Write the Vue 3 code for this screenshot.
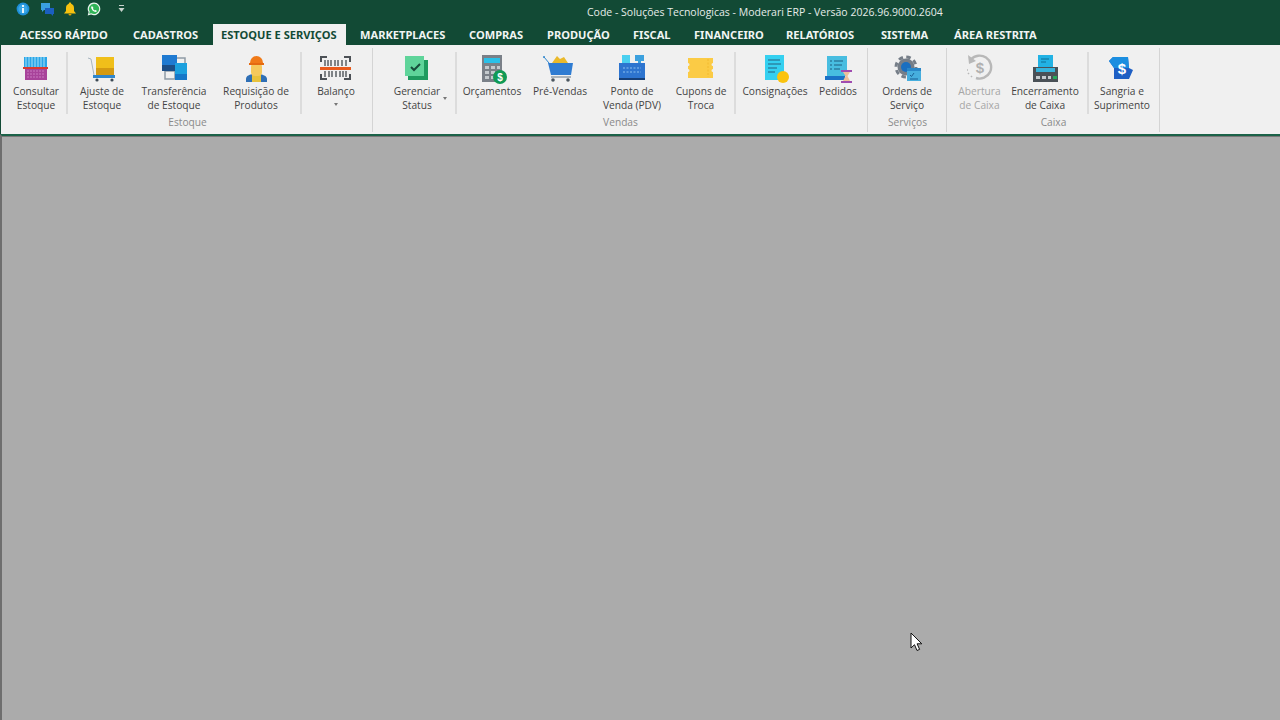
<script setup>
const tabs = ['ACESSO RÁPIDO', 'CADASTROS', 'ESTOQUE E SERVIÇOS', 'MARKETPLACES', 'COMPRAS', 'PRODUÇÃO', 'FISCAL', 'FINANCEIRO', 'RELATÓRIOS', 'SISTEMA', 'ÁREA RESTRITA']

const groups = [
  {
    label: 'Estoque', width: 371, pad: 4,
    items: [
      { icon: 'consultar', lines: ['Consultar', 'Estoque'], width: 60, sep: true },
      { icon: 'ajuste', lines: ['Ajuste de', 'Estoque'], width: 68 },
      { icon: 'transf', lines: ['Transferência', 'de Estoque'], width: 76 },
      { icon: 'req', lines: ['Requisição de', 'Produtos'], width: 88, sep: true },
      { icon: 'balanco', lines: ['Balanço'], width: 68, arrow: 'below' }
    ]
  },
  {
    label: 'Vendas', width: 495, pad: 6,
    items: [
      { icon: 'status', lines: ['Gerenciar', 'Status'], width: 76, arrow: 'side', sep: true },
      { icon: 'orc', lines: ['Orçamentos'], width: 70 },
      { icon: 'pre', lines: ['Pré-Vendas'], width: 66 },
      { icon: 'pdv', lines: ['Ponto de', 'Venda (PDV)'], width: 78 },
      { icon: 'cupons', lines: ['Cupons de', 'Troca'], width: 60, sep: true, after: 3 },
      { icon: 'consig', lines: ['Consignações'], width: 78 },
      { icon: 'pedidos', lines: ['Pedidos'], width: 48 }
    ]
  },
  {
    label: 'Serviços', width: 79, pad: 0,
    items: [{ icon: 'ordens', lines: ['Ordens de', 'Serviço'], width: 78 }]
  },
  {
    label: 'Caixa', width: 213, pad: 0,
    items: [
      { icon: 'abertura', lines: ['Abertura', 'de Caixa'], width: 65, disabled: true },
      { icon: 'encerramento', lines: ['Encerramento', 'de Caixa'], width: 66, sep: true, after: 9 },
      { icon: 'sangria', lines: ['Sangria e', 'Suprimento'], width: 66 }
    ]
  }
]
</script>

<template>
  <div class="app">
    <header class="titlebar">
      <div class="quick">
        <svg class="qicon" viewBox="0 0 14 14">
          <circle cx="7" cy="7" r="6.4" fill="#1e8fd8" />
          <circle cx="7" cy="7" r="4.6" fill="#39a8e8" />
          <rect x="6" y="6" width="2" height="5" fill="#e6f4fc" />
          <rect x="6" y="3" width="2" height="2" fill="#e6f4fc" />
        </svg>
        <svg class="qicon" viewBox="0 0 14 14">
          <path d="M1 1h9v7H4l-2 2V8H1z" fill="#3aa0e0" />
          <path d="M5 6h9v6h-1v2l-2-2H5z" fill="#1b5fc0" />
        </svg>
        <svg class="qicon" viewBox="0 0 14 14">
          <path d="M7 .5c.8 0 1.2.6 1.2 1.2C10 2.300 11 4 11 6v3l2 2.500H1L3 9V6c0-2 1-3.700 2.800-4.300C5.800 1.100 6.200.5 7 .5z" fill="#f6c20f" />
          <path d="M5.500 12h3a1.500 1.500 0 0 1-3 0z" fill="#e2a400" />
        </svg>
        <svg class="qicon" viewBox="0 0 14 14">
          <path d="M7 .6a6.300 6.300 0 0 0-5.400 9.500L.7 13.400l3.400-.9A6.300 6.300 0 1 0 7 .6z" fill="#e9f5ee" />
          <path d="M7 1.800a5.100 5.100 0 0 0-4.300 7.800l-.5 2.100 2.100-.5A5.100 5.100 0 1 0 7 1.800z" fill="#2fb457" />
          <path d="M5 4c-.7.5-1 1.300-.7 2.200.5 1.500 1.900 3 3.500 3.600.9.300 1.700 0 2.200-.8l-1.500-1-.7.600c-.8-.4-1.500-1.100-1.900-1.900l.6-.7z" fill="#fff" />
        </svg>
        <svg class="qmore" viewBox="0 0 7 8">
          <rect x="1" y="0" width="5" height="1" fill="#c8d2cd" />
          <path d="M0.500 3h6L3.500 7z" fill="#c8d2cd" />
        </svg>
      </div>
      <div class="title">Code - Soluções Tecnologicas - Moderari ERP - Versão 2026.96.9000.2604</div>
    </header>

    <nav class="tabs">
      <div v-for="(tab, i) in tabs" :key="tab" class="tab" :class="{ active: i === 2 }">{{ tab }}</div>
    </nav>

    <section class="ribbon">
      <div v-for="group in groups" :key="group.label" class="group" :style="{ width: group.width + 'px' }">
        <div class="items" :style="{ paddingLeft: group.pad + 'px' }">
          <template v-for="item in group.items" :key="item.icon">
            <div class="item" :class="{ disabled: item.disabled }" :style="{ width: item.width + 'px' }">
              <svg class="icon" viewBox="0 0 36 30">
                <template v-if="item.icon === 'consultar'">
                  <rect x="6" y="3" width="23" height="10" fill="#2aa5e8" />
                  <path d="M8 3v10M11 3v10M14 3v10M17 3v10M20 3v10M23 3v10M26 3v10" stroke="#a4e0f6" stroke-width="1" />
                  <rect x="5" y="13" width="25" height="2" fill="#d8392f" />
                  <rect x="7" y="15" width="22" height="11" fill="#a8439a" />
                  <path d="M9 17h17M9 20h17M9 23h17" stroke="#c97ac0" stroke-width="1" stroke-dasharray="2 1" />
                </template>
                <template v-else-if="item.icon === 'ajuste'">
                  <path d="M4 4l3 1 3 16" fill="none" stroke="#a9b6c0" stroke-width="1" />
                  <rect x="12" y="3" width="18" height="11" fill="#f0bf1a" />
                  <rect x="12" y="14" width="18" height="7" fill="#d49a12" />
                  <rect x="9" y="21" width="22" height="3" fill="#2f86cc" />
                  <circle cx="13" cy="26" r="1.600" fill="#3c4a55" />
                  <circle cx="28" cy="26" r="1.600" fill="#3c4a55" />
                </template>
                <template v-else-if="item.icon === 'transf'">
                  <rect x="20" y="4" width="9" height="8" fill="none" stroke="#8e9aa5" stroke-width="1.500" />
                  <rect x="9" y="17" width="10" height="8" fill="none" stroke="#8e9aa5" stroke-width="1.500" />
                  <rect x="6" y="1" width="15" height="16" fill="#1f7ad1" />
                  <rect x="19" y="9" width="12" height="17" fill="#1ca0de" />
                  <rect x="6" y="11" width="13" height="6" fill="#1c4e86" />
                  <rect x="19" y="20" width="12" height="6" fill="#1577c8" />
                </template>
                <template v-else-if="item.icon === 'req'">
                  <path d="M8 28v-3c0-3 3-5 10-5s11 2 11 5v3z" fill="#2f6fb5" />
                  <rect x="14" y="21" width="9" height="7" fill="#e8c23c" />
                  <rect x="13" y="9" width="11" height="13" rx="4" fill="#f5c95c" />
                  <path d="M12 9a6.500 7 0 0 1 13 0z" fill="#f07a18" />
                  <rect x="11" y="9" width="15" height="2" fill="#e56a10" />
                </template>
                <template v-else-if="item.icon === 'balanco'">
                  <path d="M3 8V3h6M32 8V3h-6M3 20v5h6M32 20v5h-6" fill="none" stroke="#4c5156" stroke-width="2" />
                  <path d="M7 6v6M10 6v6M13 6v6M17 6v6M20 6v6M24 6v6M28 6v6M7 17v6M11 17v6M14 17v6M18 17v6M22 17v6M25 17v6M28 17v6" stroke="#5a5f63" stroke-width="1.500" />
                  <rect x="2" y="13" width="31" height="3" fill="#e85a1c" />
                </template>
                <template v-else-if="item.icon === 'status'">
                  <rect x="9" y="6" width="20" height="20" fill="#1f9b5f" />
                  <rect x="6" y="2" width="19" height="20" fill="#5fd49a" />
                  <path d="M12 13l3 3 6-6" fill="none" stroke="#174c3a" stroke-width="2" />
                </template>
                <template v-else-if="item.icon === 'orc'">
                  <rect x="8" y="1" width="20" height="27" fill="#7a8088" />
                  <rect x="10" y="4" width="16" height="5" fill="#2ac0e8" />
                  <path d="M11 12h4v3h-4zM17 12h4v3h-4zM23 12h3v3h-3zM11 17h4v3h-4zM17 17h4v3h-4zM11 22h4v3h-4zM17 22h4v3h-4z" fill="#c5cace" />
                  <circle cx="26" cy="23" r="7" fill="#109a55" />
                  <text x="26" y="26.500" class="dollar" fill="#fff">$</text>
                </template>
                <template v-else-if="item.icon === 'pre'">
                  <circle cx="2" cy="3" r="1" fill="#2f86cc" />
                  <path d="M2 3l5 6" stroke="#2f86cc" stroke-width="1" />
                  <path d="M10 9l5-7 3 3 4-2 4 6z" fill="#eab92a" />
                  <path d="M6 9h25l-2 12H9z" fill="#2f7cd2" />
                  <path d="M9 23h20" stroke="#9aa5ae" stroke-width="1.600" />
                  <circle cx="11" cy="26" r="1.800" fill="#4b5660" />
                  <circle cx="26" cy="26" r="1.800" fill="#4b5660" />
                </template>
                <template v-else-if="item.icon === 'pdv'">
                  <rect x="8" y="1" width="8" height="9" fill="#4ad0f0" />
                  <rect x="21" y="1" width="9" height="6" fill="#3ba0de" />
                  <rect x="24" y="7" width="3" height="3" fill="#3ba0de" />
                  <rect x="5" y="9" width="26" height="16" fill="#2d74cf" />
                  <rect x="5" y="24" width="26" height="2" fill="#153f78" />
                  <path d="M9 14h18M9 18h18" stroke="#8cc0ee" stroke-width="1" stroke-dasharray="2 1.500" />
                </template>
                <template v-else-if="item.icon === 'cupons'">
                  <path d="M5 4h25v5a1 1 0 0 0 0 3v3a1 1 0 0 0 0 3v6H5v-6a1 1 0 0 0 0-3v-3a1 1 0 0 0 0-3z" fill="#fbcb45" />
                  <path d="M25 5v18" stroke="#f2b92e" stroke-width="1" stroke-dasharray="2 1.500" />
                </template>
                <template v-else-if="item.icon === 'consig'">
                  <rect x="8" y="1" width="19" height="25" fill="#35d0f0" />
                  <path d="M11 6h12M11 10h13M11 14h9M11 18h7" stroke="#27607e" stroke-width="1.200" />
                  <circle cx="26" cy="23" r="6" fill="#fac30e" />
                </template>
                <template v-else-if="item.icon === 'pedidos'">
                  <rect x="7" y="2" width="20" height="20" fill="#48bde0" />
                  <path d="M10 7h2M14 7h9M10 11h2M14 11h8M10 15h2M14 15h6" stroke="#1f5f80" stroke-width="1.200" />
                  <rect x="5" y="22" width="20" height="4" fill="#1b72c6" />
                  <path d="M21 17h11M21 28h11" stroke="#a04bb0" stroke-width="2" />
                  <path d="M23 18h7l-2.500 4 2.500 5h-7l2.500-5z" fill="#eebf9a" />
                </template>
                <template v-else-if="item.icon === 'ordens'">
                  <circle cx="17" cy="13" r="10" fill="none" stroke="#767e88" stroke-width="3" stroke-dasharray="4.500 3.350" />
                  <circle cx="17" cy="13" r="8.500" fill="#767e88" />
                  <circle cx="17" cy="13" r="5" fill="#1a6fc0" />
                  <rect x="18" y="14" width="14" height="13" fill="#46aede" />
                  <rect x="18" y="14" width="14" height="3" fill="#2a87c8" />
                  <path d="M21 21l1.500 1.500L25 19M21 25h8" stroke="#1b5f95" stroke-width="1" fill="none" />
                </template>
                <template v-else-if="item.icon === 'abertura'">
                  <path d="M9 5.500A11.500 11.500 0 1 1 14 24" fill="none" stroke="#b8b8b8" stroke-width="2.400" />
                  <path d="M10 23l-1-1M7 20l-1-1M6 16h-1" stroke="#b8b8b8" stroke-width="1.600" />
                  <path d="M6 1l1 9 7-3z" fill="#b8b8b8" />
                  <text x="18" y="18.500" class="dollar big" fill="#b0b0b0">$</text>
                </template>
                <template v-else-if="item.icon === 'encerramento'">
                  <rect x="11" y="1" width="15" height="15" fill="#22b2e4" />
                  <path d="M14 5h8M14 8h5" stroke="#0f6f95" stroke-width="1.200" />
                  <rect x="6" y="13" width="25" height="15" fill="#4a5157" />
                  <rect x="9" y="14" width="19" height="4" fill="#37b4dc" />
                  <path d="M9 22h4v3H9zM15 22h4v3h-4zM21 22h3v3h-3z" fill="#c6cbce" />
                  <rect x="26" y="22" width="4" height="3" fill="#27a85a" />
                </template>
                <template v-else-if="item.icon === 'sangria'">
                  <path d="M5 7l4-4h15l1 11 4 2-4 9H10V14z" fill="#1e5fc4" />
                  <path d="M5 7l4-4h15l1 11H10z" fill="#1b8ee0" />
                  <text x="18" y="19.500" class="dollar big" fill="#fff">$</text>
                </template>
              </svg>
              <div class="caption">
                <span v-for="line in item.lines" :key="line">{{ line }}</span>
                <i v-if="item.arrow === 'below'" class="caret"></i>
              </div>
              <i v-if="item.arrow === 'side'" class="caret side"></i>
            </div>
            <div v-if="item.sep" class="sep" :style="{ marginLeft: (item.after || 0) + 'px' }"></div>
          </template>
        </div>
        <div class="group-label">{{ group.label }}</div>
      </div>
    </section>

    <main class="workspace">
      <svg class="cursor" viewBox="0 0 13 20" width="13" height="20">
        <path d="M1 1v15l3.500-3.300 2.500 5.800 2.600-1.100-2.500-5.600h4.700z" fill="#fff" stroke="#111" stroke-width="1" />
      </svg>
    </main>
  </div>
</template>

<style scoped>
.app {
  width: 1280px;
  height: 720px;
  display: flex;
  flex-direction: column;
  overflow: hidden;
  font-family: "Open Sans", "Noto Sans", sans-serif;
  background: #124a35;
}

.titlebar {
  height: 24px;
  display: flex;
  align-items: flex-start;
  flex-shrink: 0;
}

.quick {
  display: flex;
  align-items: center;
  gap: 9.500px;
  padding: 2px 0 0 16px;
  width: 587px;
  box-sizing: border-box;
}

.qicon {
  width: 14px;
  height: 14px;
}

.qmore {
  width: 7px;
  height: 8px;
  margin-left: 8px;
}

.title {
  color: #e6ece9;
  font-size: 10.500px;
  line-height: 24px;
  white-space: nowrap;
}

.tabs {
  height: 21px;
  display: grid;
  grid-template-columns: 113px 88px 133px 115px 78px 86px 61px 92px 95px 73px auto;
  justify-content: start;
  padding-left: 12px;
  flex-shrink: 0;
}

.tab {
  padding-left: 8px;
  color: #f1f5f3;
  font-family: "Noto Sans", sans-serif;
  font-size: 11.100px;
  font-weight: 700;
  line-height: 21px;
  white-space: nowrap;
}

.tab.active {
  background: #f0f0f0;
  color: #134b36;
}

.tab:nth-child(4) {
  padding-left: 14px;
}

.ribbon {
  height: 89px;
  display: flex;
  background: #f0f0f0;
  margin-left: 1px;
  padding-left: 1px;
  flex-shrink: 0;
  box-sizing: border-box;
}

.group {
  box-sizing: border-box;
  height: 100%;
  padding-top: 3px;
  display: flex;
  flex-direction: column;
  align-items: stretch;
  position: relative;
}

.group::after {
  content: '';
  position: absolute;
  right: 0;
  top: 3px;
  bottom: 2px;
  width: 1px;
  background: #d4d4d4;
}

.items {
  height: 67px;
  display: flex;
}

.item {
  position: relative;
  flex-shrink: 0;
  display: flex;
  flex-direction: column;
  align-items: center;
  color: #444;
}

.item.disabled {
  color: #a6a6a6;
}

.icon {
  width: 36px;
  height: 30px;
  margin-top: 6px;
  flex-shrink: 0;
}

.dollar {
  font-family: "Liberation Sans", sans-serif;
  font-size: 10px;
  font-weight: 700;
  text-anchor: middle;
}

.dollar.big {
  font-size: 15px;
}

.caption {
  margin-top: 1px;
  display: flex;
  flex-direction: column;
  align-items: center;
  font-size: 10.200px;
  line-height: 13.500px;
  white-space: nowrap;
}

.caret {
  display: block;
  margin-top: 4px;
  border-left: 2.500px solid transparent;
  border-right: 2.500px solid transparent;
  border-top: 3px solid #777;
}

.caret.side {
  position: absolute;
  right: 8px;
  top: 45px;
}

.sep {
  width: 2px;
  height: 62px;
  margin-top: 4px;
  background: #dcdcdc;
  flex-shrink: 0;
}

.group-label {
  text-align: center;
  color: #8a8a8a;
  font-size: 10.200px;
  line-height: 14px;
}

.workspace {
  flex: 1;
  position: relative;
  background: #ababab;
  border-top: 2px solid #1b6248;
  border-left: 2px solid #6e6e6e;
  box-shadow: inset 0 1px 0 #777;
}

.cursor {
  position: absolute;
  left: 908px;
  top: 496px;
}
</style>

<style>
html,
body {
  margin: 0;
  background: #ababab;
}
</style>
